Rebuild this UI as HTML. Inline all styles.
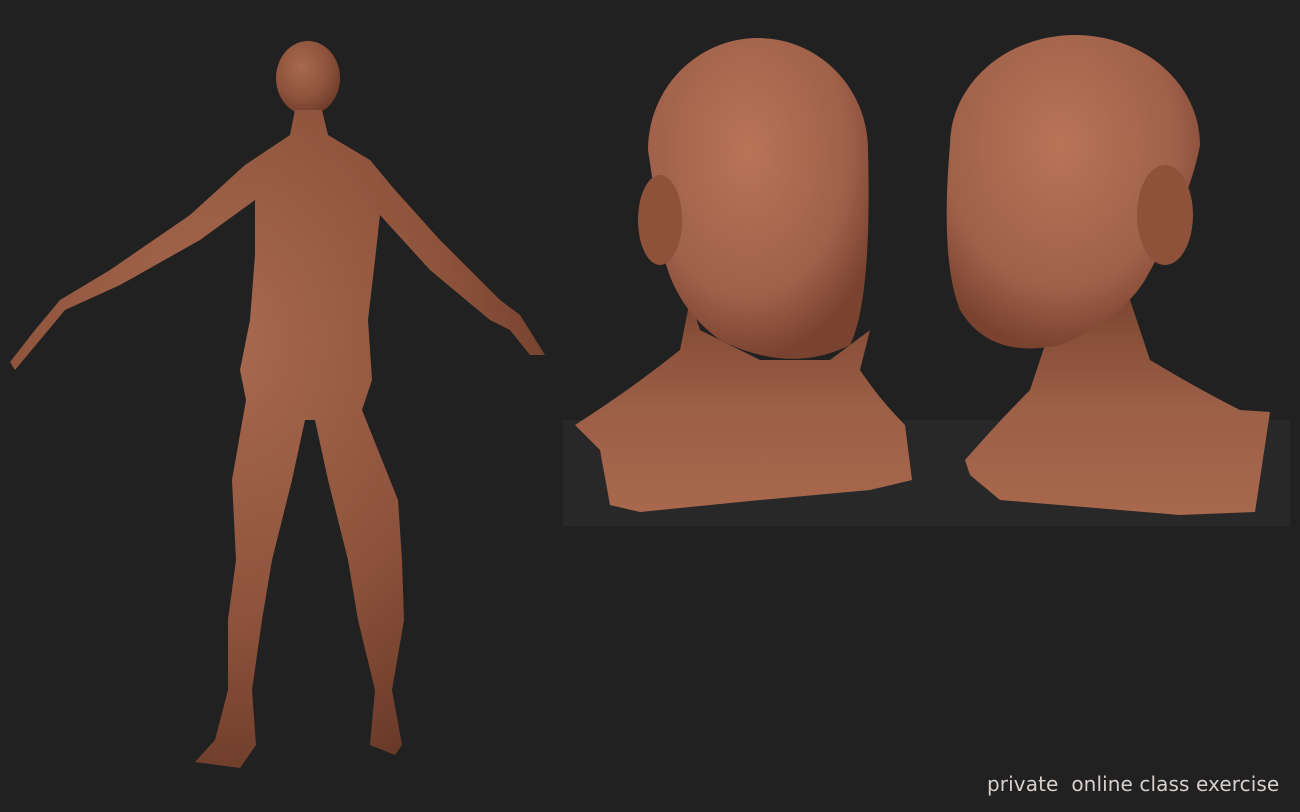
<!DOCTYPE html>
<html><head><style>
html,body{margin:0;padding:0;background:#212121;width:1300px;height:812px;overflow:hidden}
.t{position:absolute;left:987px;top:772px;color:#d8d0cc;font:20px "DejaVu Sans",sans-serif;letter-spacing:0.1px;white-space:pre}
</style></head><body>
<svg width="1300" height="812" style="position:absolute;left:0;top:0">
<defs>
<radialGradient id="sk" cx="40%" cy="35%" r="70%"><stop offset="0" stop-color="#a86a50"/><stop offset="0.6" stop-color="#8e533c"/><stop offset="1" stop-color="#6a3a28"/></radialGradient>
<radialGradient id="hd" cx="45%" cy="35%" r="65%"><stop offset="0" stop-color="#b87457"/><stop offset="0.7" stop-color="#a0614a"/><stop offset="1" stop-color="#7a4330"/></radialGradient>
<linearGradient id="nk" x1="0" y1="0" x2="0" y2="1"><stop offset="0" stop-color="#7e4732"/><stop offset="0.5" stop-color="#9c5f47"/><stop offset="1" stop-color="#a8684d"/></linearGradient>
</defs>
<rect x="563" y="420" width="727" height="106" fill="#282828"/>
<g fill="url(#sk)">
<ellipse cx="308" cy="78" rx="32" ry="37"/>
<path d="M295 110 L322 110 L328 135 L370 160 L395 190 L440 240 L500 300 L520 315 L545 355 L530 355 L510 330 L490 320 L430 270 L380 215 L375 260 L368 320 L372 380 L362 410 L398 500 L402 560 L404 620 L392 690 L402 745 L395 755 L370 745 L375 690 L358 620 L348 560 L328 480 L315 420 L305 420 L292 480 L272 560 L262 620 L252 690 L256 745 L240 768 L195 762 L215 740 L228 690 L228 620 L236 560 L232 480 L246 400 L240 370 L250 320 L255 255 L255 200 L200 240 L120 285 L65 310 L40 340 L15 370 L10 362 L35 330 L60 300 L110 270 L190 215 L245 165 L290 135 Z"/>
</g>
<path d="M575 425 Q630 390 680 350 L690 300 L700 330 L760 360 L830 360 L870 330 L860 370 Q880 400 905 425 L912 480 L870 490 L760 500 L640 512 L610 505 L600 450 Z" fill="url(#nk)"/>
<path d="M648 150 A110 112 0 0 1 868 150 Q872 300 850 345 Q790 375 720 340 Q665 300 660 230 Z" fill="url(#hd)"/>
<ellipse cx="660" cy="220" rx="22" ry="45" fill="#8e523b"/>
<path d="M965 460 Q1000 420 1030 390 L1050 330 L1130 300 L1150 360 Q1200 390 1240 410 L1270 412 L1255 512 L1180 515 L1000 500 L970 475 Z" fill="url(#nk)"/>
<path d="M950 145 A125 110 0 0 1 1200 145 Q1190 200 1145 280 Q1120 320 1060 345 Q990 360 960 310 Q940 260 950 145 Z" fill="url(#hd)"/>
<ellipse cx="1165" cy="215" rx="28" ry="50" fill="#8e523b"/>
</svg>
<div class="t">private  online class exercise</div>
</body></html>
